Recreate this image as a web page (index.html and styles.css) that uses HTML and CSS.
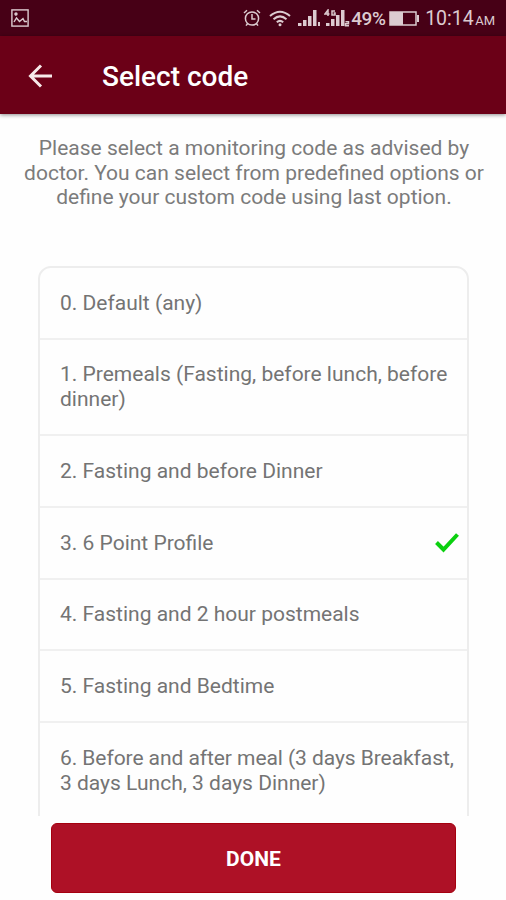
FILE: index.html
```html
<!DOCTYPE html>
<html lang="en">
<head>
<meta charset="utf-8">
<title>Select code</title>
<link rel="stylesheet" href="styles.css">
</head>
<body>
<div class="screen">
  <div class="status">
    <svg class="picture" width="18" height="18" viewBox="0 0 18 18" fill="none" stroke="currentColor" stroke-width="1.4"><rect x=".9" y=".9" width="16.2" height="16.2"/><path d="M3 13 5.500 9 8.500 12.500 12 9.500 13.500 12.500H16"/><circle cx="5" cy="5" r="1" fill="currentColor"/></svg>
    <svg class="alarm" width="18" height="18" viewBox="0 0 18 18" fill="none" stroke="currentColor" stroke-width="1.5"><circle cx="9" cy="9.5" r="6.6"/><path d="M9 5v5h3.5M1 4l3-2.7M17 4l-3-2.7M4.5 14.7 3 16.6M13.500 14.700 15 16.600"/></svg>
    <svg class="wifi" width="22" height="17" viewBox="0 0 22 17" fill="none" stroke="currentColor" stroke-width="2"><path d="M1 6Q11-2.500 21 6M4.500 9.300Q11 3.500 17.500 9.300M7.800 12.300Q11 9.500 14.200 12.300"/><circle cx="11" cy="14.800" r="1.500" fill="currentColor" stroke="none"/></svg>
    <svg class="signal" width="23" height="18" viewBox="0 0 23 18" fill="currentColor"><path d="M0 14h3.500v3H0zM5 11h3.500v6H5zM10 7h3.500v10H10zM15 1h3.500v16H15zM20 13h2v4h-2z"/></svg>
    <svg class="signal-4g" width="27" height="18" viewBox="0 0 27 18" fill="currentColor"><path d="M2 14h3.500v3H2zM7 10h3.500v7H7zM12 6h3.500v11H12zM17 1h3.500v16H17z"/><path d="M4 7V1L1 5h4.500M11 2H8v4h3V4H9.500M21.500 12.700h3v2h-3v2h3.500" fill="none" stroke="currentColor" stroke-width="1.500"/></svg>
    <span class="percent">49%</span>
    <svg class="battery" width="31" height="15" viewBox="0 0 31 15" fill="currentColor"><path d="M1 1h26v13H1z" fill="none" stroke="currentColor" stroke-width="1.500"/><path d="M1 1h13v13H1zM28 4h2v7h-2z"/></svg>
    <span class="time">10:14</span><span class="ampm">AM</span>
  </div>
  <header class="bar">
    <svg class="back" width="24" height="24" viewBox="0 0 24 24" fill="none" stroke="currentColor" stroke-width="3"><path d="M24 12H3M13 1.500 2.500 12 13 22.500"/></svg>
    <h1>Select code</h1>
  </header>
  <main>
    <p class="intro">Please select a monitoring code as advised by<br>doctor. You can select from predefined options or<br>define your custom code using last option.</p>
    <ul class="codes">
      <li>0. Default (any)</li>
      <li>1. Premeals (Fasting, before lunch, before<br>dinner)</li>
      <li>2. Fasting and before Dinner</li>
      <li class="selected">3. 6 Point Profile<svg class="check" width="24" height="20" viewBox="0 0 24 20" fill="none" stroke="currentColor" stroke-width="4"><path d="M1.500 9.500 8.500 16.500 22.500 1.500" /></svg></li>
      <li>4. Fasting and 2 hour postmeals</li>
      <li>5. Fasting and Bedtime</li>
      <li class="last"><span class="tight">6. Before and after meal (3 days Breakfast,</span><br>3 days Lunch, 3 days Dinner)</li>
    </ul>
  </main>
  <button class="done">DONE</button>
</div>
</body>
</html>
```
FILE: styles.css
```css
* { box-sizing: border-box; }
body { margin: 0; background: #fefefe; font-family: Roboto, sans-serif; }
.screen { width: 506px; height: 900px; display: flex; flex-direction: column; overflow: hidden; }
.status { height: 36px; flex: none; background: #470016; color: #dccbd0; display: flex; align-items: center; padding: 0 11px; }
.status svg { flex: none; }
.picture { margin-right: auto; }
.alarm { margin-right: 8px; }
.wifi { margin-right: 7px; }
.signal { margin-right: 3px; }
.percent { font-size: 19px; font-weight: 500; width: 36px; letter-spacing: -.4px; margin-right: 2px; }
.battery { margin-right: 5px; }
.time { font-size: 19.500px; width: 49px; white-space: nowrap; }
.ampm { font-size: 13px; margin: 5px 0 0 1px; }
.bar { height: 78px; flex: none; background: #6b0017; color: #fff; display: flex; align-items: center; padding: 1px 28px 0; box-shadow: 0 1px 4px rgba(0,0,0,.45); z-index: 1; }
.back { color: #f7e9e9; margin-right: 50px; }
h1 { margin: 2px 0 0; font-size: 28px; font-weight: 500; }
main { height: 702px; flex: none; overflow: hidden; padding: 22px 12px 0 38px; }
.intro { margin: 0 0 0 -24px; text-align: center; white-space: nowrap; font-size: 21px; line-height: 24.600px; color: #7b7b7b; }
.codes { list-style: none; margin: 56.200px 0 0; padding: 0; width: 431px; border: 2px solid #ededed; border-radius: 13px; color: #747474; font-size: 21px; line-height: 24.600px; }
.codes li { padding: 22.700px 8px 22.500px 20px; border-bottom: 2px solid #f0f0f0; white-space: nowrap; }
.codes .last { padding-bottom: 60px; }
.tight { letter-spacing: -.07px; }
.selected { display: flex; align-items: center; justify-content: space-between; }
.check { color: #0bd010; }
.done { width: 405px; height: 70px; flex: none; margin: 7px 0 0 51px; padding-top: 3px; border: 1px solid #a5000f; border-radius: 6px; background: #ae1126; color: #fff; font: 700 21px Roboto, sans-serif; }
```
